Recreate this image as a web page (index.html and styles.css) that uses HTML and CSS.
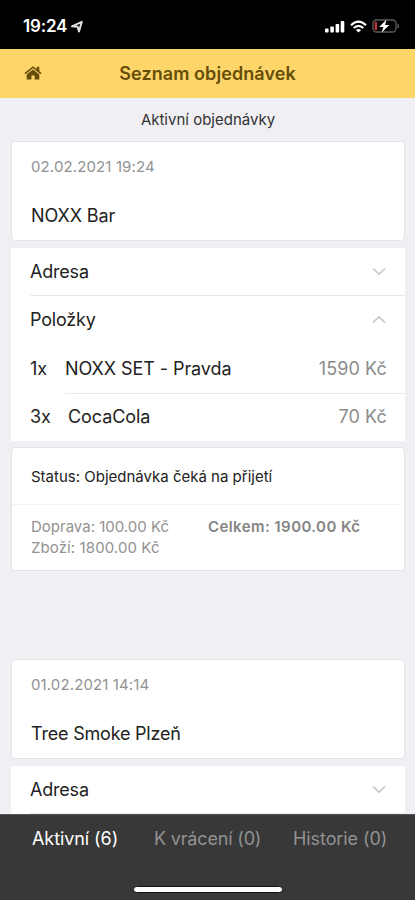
FILE: index.html
```html
<!DOCTYPE html>
<html lang="cs">
<head>
<meta charset="utf-8">
<title>Seznam objednávek</title>
<link rel="stylesheet" href="styles.css">
</head>
<body>
<div class="app">
  <header class="status">
    <span class="time">19:24</span>
    <svg class="arrow" width="12" height="13" viewBox="0 0 12 13"><path d="M1 6.300 10.800 1.800 8 11.400 6.600 6.700Z" fill="none" stroke="#dedede" stroke-width="2" stroke-linejoin="round"/></svg>
    <svg class="signal" width="20" height="13" viewBox="0 0 20 13" fill="#fff"><rect x="0" y="8.500" width="3.600" height="4" rx=".9"/><rect x="5.300" y="6.500" width="3.600" height="6" rx=".9"/><rect x="10.600" y="4" width="3.600" height="8.500" rx=".9"/><rect x="15.700" y="1" width="3.600" height="11.500" rx=".9"/></svg>
    <svg class="wifi" width="17" height="13" viewBox="0 0 17 13" fill="none" stroke="#fff" stroke-width="2.200"><path d="M1 5.200Q8.500-1.800 16 5.200"/><path d="M3.700 8Q8.500 3.600 13.300 8"/><path d="M8.500 12.500 5.900 9.900Q8.500 7.900 11.100 9.900Z" fill="#fff" stroke="none"/></svg>
    <svg class="battery" width="28" height="14" viewBox="0 0 28 14"><rect x="1" y="1" width="23" height="12" rx="3.500" fill="none" stroke="#5c5c5c" stroke-width="1.300"/><path d="M25.500 4.500Q27 5 27 7T25.500 9.500Z" fill="#666"/><rect x="2.600" y="2.800" width="2.400" height="8.400" rx="1" fill="#b9393b"/><path d="M14.500.5 7.200 7.900H11.300L9.700 13.500 17.300 6.100H13.100Z" fill="#fff"/></svg>
  </header>
  <nav class="navbar">
    <svg class="home" width="18" height="14" viewBox="0 0 18 14" fill="#664d09"><path d="M9 3.500 15.300 8.600V13.600H10.600V9.500H7.400V13.600H2.700V8.600Z"/><path d="M1 7.700 9 1.200 17 7.700" fill="none" stroke="#664d09" stroke-width="1.600"/><path d="M12.700.8H15.300V6L12.700 4Z"/></svg>
    <h1 class="title"><span>Seznam objednávek</span></h1>
  </nav>
  <main class="content">
    <h2 class="subtitle">Aktivní objednávky</h2>
    <section class="card head-card">
      <p class="date">02.02.2021 19:24</p>
      <p class="place">NOXX Bar</p>
    </section>
    <section class="list">
      <div class="row first"><span>Adresa</span><svg class="chev" width="14" height="9" viewBox="0 0 14 9"><path d="M1 1.500 7 7.200 13 1.500"/></svg></div>
      <div class="row ruled"><span>Položky</span><svg class="chev" width="14" height="9" viewBox="0 0 14 9"><path d="M1 7.500 7 1.800 13 7.500"/></svg></div>
      <div class="row"><span class="qty q1">1x</span><span class="name">NOXX SET - Pravda</span><span class="price">1590 Kč</span></div>
      <div class="row ruled-item"><span class="qty q2">3x</span><span class="name">CocaCola</span><span class="price">70 Kč</span></div>
    </section>
    <section class="card sum-card">
      <p class="state">Status: Objednávka čeká na přijetí</p>
      <div class="sums">
        <div class="parts"><p>Doprava: 100.00 Kč</p><p class="goods">Zboží: 1800.00 Kč</p></div>
        <strong class="total">Celkem: 1900.00 Kč</strong>
      </div>
    </section>
    <section class="card head-card next">
      <p class="date">01.02.2021 14:14</p>
      <p class="place smoke">Tree Smoke Plzeň</p>
    </section>
    <section class="list">
      <div class="row first"><span>Adresa</span><svg class="chev" width="14" height="9" viewBox="0 0 14 9"><path d="M1 1.500 7 7.200 13 1.500"/></svg></div>
      <div class="row ruled"></div>
    </section>
  </main>
  <footer class="tabbar">
    <div class="tabs"><span class="tab t1">Aktivní (6)</span><span class="tab t2">K vrácení (0)</span><span class="tab t3">Historie (0)</span></div>
    <div class="indicator"></div>
  </footer>
</div>
</body>
</html>
```
FILE: styles.css
```css
* { box-sizing: border-box; }
body, h1, h2, p { margin: 0; font-weight: 400; }
body { background: #efeff4; font-family: Inter, "Liberation Sans", sans-serif; color: #222; }
span, strong, p, h2 { white-space: nowrap; }
svg { flex: none; display: block; }
.app { width: 415px; height: 900px; display: flex; flex-direction: column; overflow: hidden; }
.status { height: 49px; flex: none; background: #000; display: flex; align-items: center; padding: 3px 15px 0 23px; }
.time { color: #fff; font-size: 17px; font-weight: 600; line-height: 20px; letter-spacing: -.2px; }
.arrow { margin-left: 4px; }
.signal { margin-left: auto; }
.wifi { margin-left: 5px; }
.battery { margin-left: 5px; }
.navbar { height: 49px; flex: none; background: #fdd568; display: grid; grid-template-columns: 96px 1fr 96px; align-items: center; }
.home { margin-left: 24px; margin-top: -1px; }
.title { color: #664d09; font-size: 18px; line-height: 24px; text-align: center; letter-spacing: .07px; }
.title span { font-weight: 600; }
.content { flex: 1; min-height: 0; overflow: hidden; padding: 0 10px 0 11px; }
.subtitle { height: 43px; font-size: 15px; line-height: 43px; text-align: center; color: #333; }
.card { background: #fff; border: 1px solid #e4e4e8; border-radius: 4px; }
.head-card { height: 100px; padding: 15px 19px 0; }
.date { font-size: 15px; line-height: 20px; color: #929292; letter-spacing: .12px; }
.place { margin-top: 27px; font-size: 18px; line-height: 24px; letter-spacing: -.1px; }
.smoke { letter-spacing: -.2px; }
.list { margin-top: 7px; background: #fff; }
.row { height: 49px; display: flex; align-items: center; padding: 0 19px 0 19px; font-size: 18px; line-height: 24px; letter-spacing: -.2px; }
.row.first { height: 47px; }
.ruled { background: linear-gradient(#e9e9ec, #e9e9ec) 19px 0 / 100% 1px no-repeat; }
.ruled-item { background: linear-gradient(#e9e9ec, #e9e9ec) 54px 0 / 100% 1px no-repeat; height: 48px; }
.chev { margin-left: auto; fill: none; stroke: #c7c7c9; stroke-width: 1.7; }
.qty { letter-spacing: 0; }
.q1 { width: 35px; }
.q2 { width: 38px; }
.name { letter-spacing: -.07px; }
.price { margin-left: auto; margin-right: -1px; color: #8c8c8c; letter-spacing: .1px; }
.sum-card { margin-top: 6px; height: 124px; }
.state { height: 57px; line-height: 57px; font-size: 15px; padding-left: 19px; margin-right: 4px; border-bottom: 1px solid #f3f3f3; }
.sums { display: flex; padding: 11px 0 0 19px; font-size: 15px; line-height: 21px; color: #929292; }
.parts { width: 177px; }
.goods { letter-spacing: .1px; }
.total { font-weight: 600; color: #858585; letter-spacing: .42px; }
.next { margin-top: 88px; }
.tabbar { height: 86px; flex: none; background: #383838; display: flex; flex-direction: column; align-items: center; border-top: 1px solid #555; }
.tabs { width: 100%; height: 48px; display: flex; padding-left: 32px; font-size: 18px; line-height: 48px; color: #929292; }
.tab { letter-spacing: -.08px; }
.t1 { width: 122px; color: #fff; }
.t2 { width: 139px; letter-spacing: -.17px; }
.indicator { width: 150px; height: 7px; margin-top: 23px; background: #fff; border: 1px solid #111; border-radius: 4px; }
```
